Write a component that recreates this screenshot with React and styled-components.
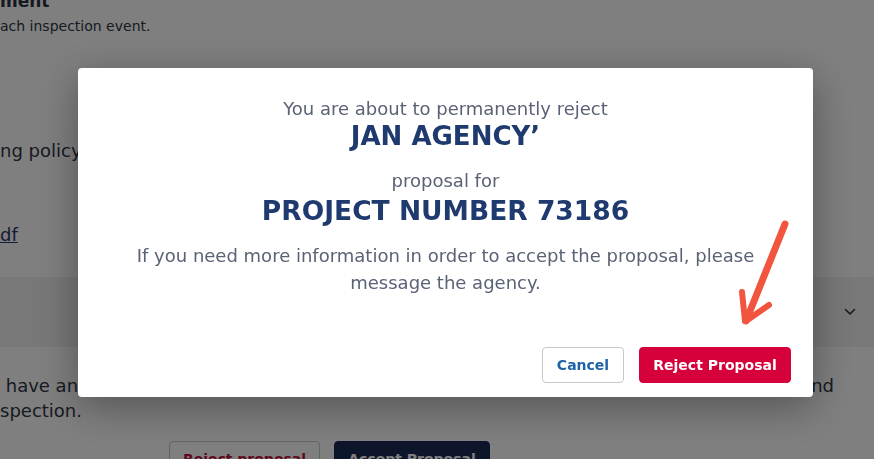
import React from "react";
import styled, { createGlobalStyle } from "styled-components";

const Global = createGlobalStyle`
  html, body { margin: 0; padding: 0; background: #ffffff; overflow: hidden; }
  body { font-family: "DejaVu Sans", "Liberation Sans", sans-serif; }
  * { box-sizing: border-box; }
`;

const Page = styled.div`
  width: 874px;
  height: 459px;
  overflow: hidden;
  position: relative;
  color: #2c3345;
`;

const Section = styled.div`
  padding: ${(p) => p.$pad || "0"};
`;

const Title = styled.div`
  font-size: 17px;
  font-weight: 700;
  line-height: 20px;
  margin-top: -9px;
`;

const Small = styled.div`
  font-size: 14px;
  line-height: 18px;
  margin-top: 6px;
  color: #2f3647;
`;

const Body = styled.div`
  font-size: 18px;
  line-height: 25px;
  color: #2f3647;
  margin-top: ${(p) => p.$mt || 0}px;
`;

const LinkLine = styled.div`
  margin-top: ${(p) => p.$mt || 0}px;
`;

const LinkText = styled.a`
  font-size: 18px;
  line-height: 25px;
  color: #2a3a6a;
  text-decoration: underline;
`;

const Band = styled.div`
  height: 70px;
  background: #f0f0f0;
  display: flex;
  align-items: center;
  justify-content: flex-end;
  padding-right: 18px;
  margin-top: 30px;
  color: #333;
`;

const SplitRow = styled.div`
  display: flex;
  justify-content: space-between;
  padding-right: 40px;
`;

const BgButtons = styled.div`
  display: flex;
  gap: 14px;
  padding-left: 169px;
  margin-top: 18px;
`;

const BgButton = styled.button`
  height: 36px;
  padding: 0 10px;
  border-radius: 4px;
  font-family: inherit;
  font-size: 14px;
  font-weight: 700;
  white-space: nowrap;
  border: 1px solid ${(p) => (p.$primary ? "#1b2a57" : "#c9c9c9")};
  background: ${(p) => (p.$primary ? "#1b2a57" : "#ffffff")};
  color: ${(p) => (p.$primary ? "#ffffff" : "#c0113f")};
  width: ${(p) => p.$w}px;
`;

const Overlay = styled.div`
  position: fixed;
  inset: 0;
  background: rgba(0, 0, 0, 0.5);
  padding-top: 68px;
  padding-left: 78px;
`;

const Modal = styled.div`
  width: 735px;
  height: 329px;
  background: #ffffff;
  border-radius: 4px;
  box-shadow: 0 10px 40px rgba(0, 0, 0, 0.35);
  display: flex;
  flex-direction: column;
  align-items: center;
  padding: 29px 22px 14px;
  text-align: center;
  position: relative;
`;

const Lead = styled.div`
  font-size: 18px;
  line-height: 24px;
  color: #5a6275;
  margin-top: ${(p) => p.$mt || 0}px;
`;

const Strong = styled.div`
  font-size: ${(p) => p.$size}px;
  font-weight: 700;
  color: #1f3a6e;
  line-height: 1.2;
  margin-top: ${(p) => p.$mt || 0}px;
`;

const Para = styled.p`
  margin: 15px 0 0;
  font-size: 18px;
  line-height: 27px;
  color: #5a6275;
  max-width: 660px;
`;

const Actions = styled.div`
  margin-top: auto;
  align-self: flex-end;
  display: flex;
  gap: 15px;
`;

const Btn = styled.button`
  height: 36px;
  border-radius: 4px;
  font-family: inherit;
  font-size: 14px;
  font-weight: 700;
  cursor: pointer;
  width: ${(p) => p.$w}px;
  border: 1px solid ${(p) => (p.$danger ? "#d6003a" : "#c8c8cc")};
  background: ${(p) => (p.$danger ? "#d6003a" : "#ffffff")};
  color: ${(p) => (p.$danger ? "#ffffff" : "#1f62a6")};
`;

const Arrow = styled.svg`
  position: absolute;
  left: 735px;
  top: 215px;
  overflow: visible;
`;

const Chevron = () => (
  <svg width="12" height="8" viewBox="0 0 12 8" fill="none">
    <path d="M1.5 1.5L6 6l4.5-4.5" stroke="#333" strokeWidth="1.6" strokeLinecap="round" strokeLinejoin="round" />
  </svg>
);

export default function App() {
  return (
    <Page>
      <Global />
      <Section>
        <Title>ment</Title>
        <Small>ach inspection event.</Small>
        <Body $mt={103}>ng policy</Body>
        <LinkLine $mt={59}>
          <LinkText>df</LinkText>
        </LinkLine>
      </Section>
      <Band>
        <Chevron />
      </Band>
      <Section $pad="26px 0 0">
        <SplitRow>
          <Body>&nbsp;have any</Body>
          <Body>nd</Body>
        </SplitRow>
        <Body>spection.</Body>
      </Section>
      <BgButtons>
        <BgButton $w={151}>Reject proposal</BgButton>
        <BgButton $primary $w={156}>Accept Proposal</BgButton>
      </BgButtons>
      <Overlay>
        <Modal>
          <Lead>You are about to permanently reject</Lead>
          <Strong $size={26}>JAN AGENCY’</Strong>
          <Lead $mt={17}>proposal for</Lead>
          <Strong $size={26.5} $mt={2}>PROJECT NUMBER 73186</Strong>
          <Para>
            If you need more information in order to accept the proposal, please message the agency.
          </Para>
          <Actions>
            <Btn $w={82}>Cancel</Btn>
            <Btn $danger $w={152}>Reject Proposal</Btn>
          </Actions>
        </Modal>
      </Overlay>
      <Arrow width="60" height="115" viewBox="0 0 60 115">
        <g stroke="#f2553f" strokeLinecap="round" strokeLinejoin="round" fill="none">
          <path d="M50 9 L11 106" strokeWidth="7" />
          <path d="M10 106 L7 77" strokeWidth="6" />
          <path d="M11 106 L34 90" strokeWidth="6" />
        </g>
      </Arrow>
    </Page>
  );
}
